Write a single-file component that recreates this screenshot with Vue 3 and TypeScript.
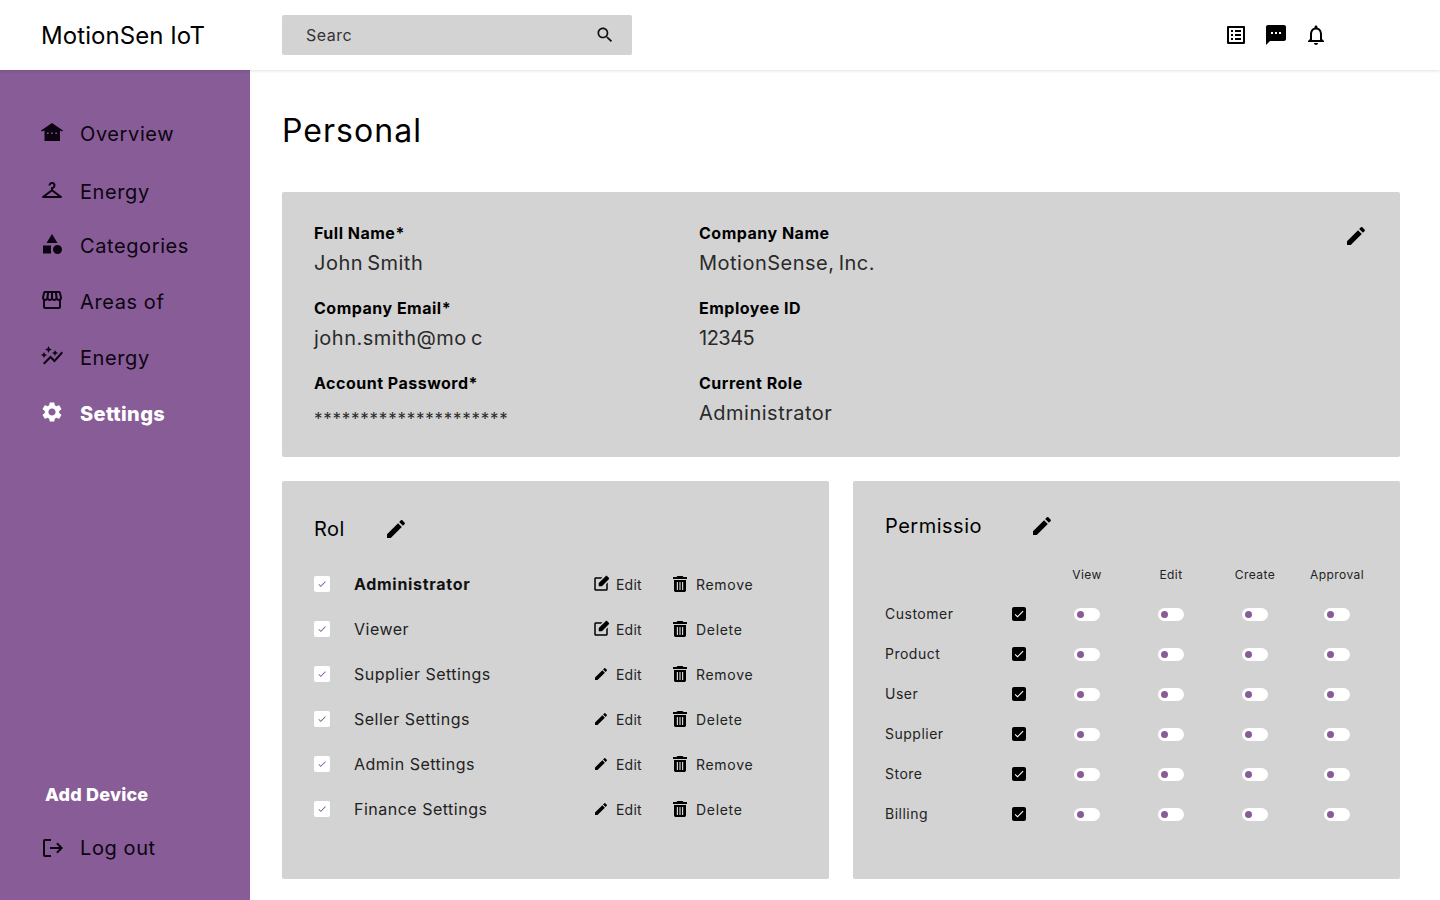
<script setup lang="ts">
const icons: Record<string, string> = {
  checkroom: 'M21.6 18.2 13 11.75v-.91c1.65-.49 2.8-2.17 2.43-4.05-.26-1.31-1.3-2.4-2.61-2.7C10.54 3.57 8.5 5.3 8.5 7.5h2c0-.83.67-1.5 1.5-1.5s1.5.67 1.5 1.5c0 .84-.69 1.52-1.53 1.5-.54-.01-.97.45-.97.99v1.76L2.4 18.2c-.77.58-.36 1.8.6 1.8h18c.96 0 1.37-1.22.6-1.8zM6 18l6-4.5 6 4.5H6z',
  category: 'M12 2l-5.5 9h11zM17.5 13a4.5 4.5 0 1 0 0 9 4.5 4.5 0 0 0 0-9zM3 13.5h8v8H3z',
  store: 'M21.9 8.89l-1.05-4.37c-.22-.9-1-1.52-1.91-1.52H5.05c-.9 0-1.69.63-1.9 1.52L2.1 8.89c-.24 1.02-.02 2.06.62 2.88.08.11.19.19.28.29V19c0 1.1.9 2 2 2h14c1.1 0 2-.9 2-2v-6.94c.09-.09.2-.18.28-.28.64-.82.87-1.87.62-2.89zm-2.99-3.9l1.05 4.37c.1.42.01.84-.25 1.17-.14.18-.44.47-.94.47-.61 0-1.14-.49-1.21-1.14L16.98 5l1.93-.01zM13 5h1.96l.54 4.52c.05.39-.07.78-.33 1.07-.22.26-.54.41-.95.41-.67 0-1.22-.59-1.22-1.31V5zM8.49 9.52L9.04 5H11v4.69c0 .72-.55 1.31-1.29 1.31-.34 0-.65-.15-.89-.41-.25-.29-.37-.68-.33-1.07zm-4.45-.16L5.05 5h1.97l-.58 4.86c-.08.65-.6 1.14-1.21 1.14-.49 0-.8-.29-.93-.47-.27-.32-.36-.75-.26-1.17zM5 19v-6.03c.08.01.15.03.23.03.87 0 1.66-.36 2.24-.95.6.6 1.4.95 2.31.95.87 0 1.65-.36 2.23-.93.59.57 1.39.93 2.29.93.84 0 1.64-.35 2.24-.95.58.59 1.37.95 2.24.95.08 0 .15-.02.23-.03V19H5z',
  graph: 'M14.06 9.94L12 9l2.06-.94L15 6l.94 2.06L18 9l-2.06.94L15 12l-.94-2.06zM4 14l.94-2.06L7 11l-2.06-.94L4 8l-.94 2.06L1 11l2.06.94L4 14zm4.5-5l1.09-2.41L12 5.5l-2.41-1.09L8.5 2 7.41 4.41 5 5.5l2.41 1.09L8.5 9zm-4 11.5l6-6.01 4 4L23 8.93l-1.41-1.41-7.09 7.97-4-4L3 19l1.5 1.5z',
  settings: 'M19.14 12.94c.04-.3.06-.61.06-.94 0-.32-.02-.64-.07-.94l2.03-1.58c.18-.14.23-.41.12-.61l-1.92-3.32c-.12-.22-.37-.29-.59-.22l-2.39.96c-.5-.38-1.03-.7-1.62-.94l-.36-2.54c-.04-.24-.24-.41-.48-.41h-3.84c-.24 0-.43.17-.47.41l-.36 2.54c-.59.24-1.13.57-1.62.94l-2.39-.96c-.22-.08-.47 0-.59.22L2.74 8.87c-.12.21-.08.47.12.61l2.03 1.58c-.05.3-.09.63-.09.94s.02.64.07.94l-2.03 1.58c-.18.14-.23.41-.12.61l1.92 3.32c.12.22.37.29.59.22l2.39-.96c.5.38 1.03.7 1.62.94l.36 2.54c.05.24.24.41.48.41h3.84c.24 0 .44-.17.47-.41l.36-2.54c.59-.24 1.13-.56 1.62-.94l2.39.96c.22.08.47 0 .59-.22l1.92-3.32c.12-.22.07-.47-.12-.61l-2.01-1.58zM12 15.6c-1.98 0-3.6-1.62-3.6-3.6s1.62-3.6 3.6-3.6 3.6 1.62 3.6 3.6-1.62 3.6-3.6 3.6z',
  house: 'M12 3 1 10.500 1.600 11.500 4.500 10.500V21h15.500V10.500l2.400 1 .6-1zM7 12.400h1.500v1.500H7zM11.200 12.400h1.500v1.500h-1.500zM15.400 12.400h1.500v1.500h-1.500z',
  logout: 'M5 5h6V3H5c-1.100 0-2 .9-2 2v14c0 1.100.9 2 2 2h6v-2H5zM10 11h9.200l-3-3 1.400-1.400L23 12l-5.400 5.400-1.400-1.400 3-3H10z',
  search: 'M15.5 14h-.79l-.28-.27C15.41 12.59 16 11.11 16 9.5 16 5.91 13.09 3 9.5 3S3 5.91 3 9.5 5.91 16 9.5 16c1.61 0 3.09-.59 4.23-1.57l.27.28v.79l5 4.99L20.49 19l-4.99-5zm-6 0C7.01 14 5 11.99 5 9.5S7.01 5 9.500 5 14 7.010 14 9.500 11.990 14 9.500 14z',
  list: 'M19 5v14H5V5h14m1.100-2H3.900c-.5 0-.9.4-.9.9v16.200c0 .4.4.9.9.9h16.200c.4 0 .9-.5.9-.9V3.900c0-.5-.5-.9-.9-.9zM11 7h6v2h-6V7zm0 4h6v2h-6v-2zm0 4h6v2h-6zM7 7h2v2H7zm0 4h2v2H7zm0 4h2v2H7z',
  sms: 'M20 2H4c-1.100 0-1.990.9-1.990 2L2 22l4-4h14c1.100 0 2-.9 2-2V4c0-1.100-.9-2-2-2zM9 11H7V9h2v2zm4 0h-2V9h2v2zm4 0h-2V9h2v2z',
  bell: 'M12 22c1.100 0 2-.9 2-2h-4c0 1.100.9 2 2 2zm6-6v-5c0-3.070-1.630-5.640-4.500-6.320V4c0-.83-.67-1.500-1.500-1.500s-1.500.67-1.500 1.500v.68C7.640 5.360 6 7.920 6 11v5l-2 2v1h16v-1l-2-2zm-2 1H8v-6c0-2.480 1.510-4.500 4-4.500s4 2.020 4 4.500v6z',
  edit: 'M3 17.250V21h3.750L17.810 9.940l-3.750-3.750L3 17.250zM20.710 7.040c.39-.39.39-1.020 0-1.410l-2.340-2.340c-.39-.39-1.020-.39-1.410 0l-1.830 1.830 3.750 3.750 1.830-1.830z',
  editBox: 'M5 21c-1.100 0-2-.9-2-2V5c0-1.100.9-2 2-2h8.900l-2 2H5v14h14v-6.900l2-2V19c0 1.100-.9 2-2 2zM9 15v-4.250l9.200-9.200c.6-.6 1.500-.6 2.100 0l2.100 2.100c.6.6.6 1.500 0 2.100L13.250 15z',
  trash: 'M4.500 0h5l1 1H14v2H0V1h3.500zM1 4h12v10.200c0 1-.8 1.800-1.800 1.800H2.800C1.800 16 1 15.200 1 14.200zM3.800 6v8h1.200V6zM6.400 6v8h1.200V6zM9 6v8h1.200V6z',
  check: 'M9 16.170 4.830 12l-1.420 1.410L9 19 21 7l-1.410-1.410z'
}

const navItems = [
  { label: 'Overview', icon: 'house', shift: '' },
  { label: 'Energy', icon: 'checkroom', shift: 'row-b' },
  { label: 'Categories', icon: 'category', shift: '' },
  { label: 'Areas of', icon: 'store', shift: '' },
  { label: 'Energy', icon: 'graph', shift: '' },
  { label: 'Settings', icon: 'settings', shift: 'active' }
]

const profile = [
  [
    { label: 'Full Name*', value: 'John Smith', kind: '' },
    { label: 'Company Email*', value: 'john.smith@mo c', kind: '' },
    { label: 'Account Password*', value: '*********************', kind: 'secret' }
  ],
  [
    { label: 'Company Name', value: 'MotionSense, Inc.', kind: '' },
    { label: 'Employee ID', value: '12345', kind: 'digits' },
    { label: 'Current Role', value: 'Administrator', kind: '' }
  ]
]

const roles = [
  { name: 'Administrator', icon: 'editBox', action: 'Remove', strong: true },
  { name: 'Viewer', icon: 'editBox', action: 'Delete', strong: false },
  { name: 'Supplier Settings', icon: 'edit', action: 'Remove', strong: false },
  { name: 'Seller Settings', icon: 'edit', action: 'Delete', strong: false },
  { name: 'Admin Settings', icon: 'edit', action: 'Remove', strong: false },
  { name: 'Finance Settings', icon: 'edit', action: 'Delete', strong: false }
]

const columns = ['View', 'Edit', 'Create', 'Approval']
const permissions = ['Customer', 'Product', 'User', 'Supplier', 'Store', 'Billing']
</script>

<template>
  <div class="app">
    <header class="topbar">
      <div class="logo">MotionSen IoT</div>
      <div class="search">
        <span>Searc</span>
        <svg class="search-icon" viewBox="0 0 24 24"><path :d="icons.search" /></svg>
      </div>
      <div class="top-icons">
        <svg viewBox="0 0 24 24"><path :d="icons.list" /></svg>
        <svg viewBox="0 0 24 24"><path :d="icons.sms" /></svg>
        <svg viewBox="0 0 24 24"><path :d="icons.bell" /></svg>
      </div>
    </header>

    <div class="body">
      <aside class="sidebar">
        <nav class="nav">
          <a v-for="(item, i) in navItems" :key="i" class="nav-item" :class="item.shift">
            <svg viewBox="0 0 24 24"><path :d="icons[item.icon]" /></svg>
            <span>{{ item.label }}</span>
          </a>
        </nav>
        <div class="add-device">Add Device</div>
        <a class="nav-item logout">
          <svg viewBox="0 0 24 24"><path :d="icons.logout" /></svg>
          <span>Log out</span>
        </a>
      </aside>

      <main class="main">
        <h1 class="title">Personal</h1>

        <section class="card profile">
          <div v-for="(col, c) in profile" :key="c" class="profile-col">
            <div v-for="field in col" :key="field.label" class="field">
              <div class="field-label">{{ field.label }}</div>
              <div class="field-value" :class="field.kind">{{ field.value }}</div>
            </div>
          </div>
          <svg class="profile-edit" viewBox="0 0 24 24"><path :d="icons.edit" /></svg>
        </section>

        <div class="lower">
          <section class="card roles">
            <div class="card-head">
              <h2>Rol</h2>
              <svg viewBox="0 0 24 24"><path :d="icons.edit" /></svg>
            </div>
            <div v-for="role in roles" :key="role.name" class="role-row">
              <span class="tick">
                <svg viewBox="0 0 24 24"><path :d="icons.check" /></svg>
              </span>
              <span class="role-name" :class="{ strong: role.strong }">{{ role.name }}</span>
              <span class="role-action edit-action">
                <svg :class="{ pencil: role.icon === 'edit' }" viewBox="0 0 24 24"><path :d="icons[role.icon]" /></svg>
                Edit
              </span>
              <span class="role-action trash-action">
                <svg viewBox="0 0 14 16"><path fill-rule="evenodd" :d="icons.trash" /></svg>
                {{ role.action }}
              </span>
            </div>
          </section>

          <section class="card perms">
            <div class="card-head perm-head">
              <h2>Permissio</h2>
              <svg viewBox="0 0 24 24"><path :d="icons.edit" /></svg>
            </div>
            <div class="perm-grid">
              <span></span>
              <span></span>
              <span v-for="col in columns" :key="col" class="perm-col">{{ col }}</span>
              <template v-for="perm in permissions" :key="perm">
                <span class="perm-name">{{ perm }}</span>
                <span class="perm-cell">
                  <span class="black-box">
                    <svg viewBox="0 0 24 24"><path :d="icons.check" /></svg>
                  </span>
                </span>
                <span v-for="col in columns" :key="col" class="perm-cell">
                  <span class="toggle"><i></i></span>
                </span>
              </template>
            </div>
          </section>
        </div>
      </main>
    </div>
  </div>
</template>

<style scoped>
.app {
  width: 1440px;
  height: 900px;
  overflow: hidden;
  display: flex;
  flex-direction: column;
  font-family: Inter, "Liberation Sans", sans-serif;
  color: #000;
  background: #fff;
}
svg {
  display: block;
  flex: none;
  fill: currentColor;
}
.topbar {
  position: relative;
  z-index: 1;
  flex: none;
  height: 70px;
  display: flex;
  align-items: center;
  box-shadow: 0 1px 3px rgba(0, 0, 0, 0.12);
  background: #fff;
}
.logo {
  width: 282px;
  padding-left: 41px;
  box-sizing: border-box;
  font-size: 24px;
  letter-spacing: 0.07px;
}
.search {
  width: 350px;
  height: 40px;
  box-sizing: border-box;
  padding: 0 17px 0 24px;
  display: flex;
  align-items: center;
  justify-content: space-between;
  background: #d3d3d3;
  border-radius: 2px;
  font-size: 16px;
  letter-spacing: 0.5px;
  color: #333;
}
.search-icon {
  width: 20px;
  height: 20px;
  color: #111;
}
.top-icons {
  margin-left: auto;
  margin-right: 112px;
  display: flex;
  gap: 16px;
}
.top-icons svg {
  width: 24px;
  height: 24px;
}
.body {
  flex: 1;
  display: flex;
  min-height: 0;
}
.sidebar {
  flex: none;
  width: 250px;
  box-sizing: border-box;
  padding: 36px 0 24px 40px;
  display: flex;
  flex-direction: column;
  background: #875c97;
}
.nav {
  flex: 1;
}
.nav-item {
  height: 56px;
  display: flex;
  align-items: center;
  gap: 16px;
  font-size: 20px;
  letter-spacing: 0.6px;
  color: #0c0410;
}
.nav-item svg {
  width: 24px;
  height: 24px;
  margin-top: -4px;
}
.row-b {
  position: relative;
  top: 2px;
}
.active {
  color: #fff;
  font-weight: 800;
  letter-spacing: 0.35px;
}
.logout svg {
  margin-top: 0;
}
.add-device {
  height: 58px;
  margin-bottom: -4px;
  padding-left: 5px;
  font-size: 18px;
  font-weight: 800;
  line-height: 58px;
  letter-spacing: 0.2px;
  color: #fff;
}
.main {
  flex: 1;
  min-width: 0;
  padding: 0 40px 0 32px;
}
.title {
  margin: 0;
  height: 122px;
  padding-top: 39px;
  box-sizing: border-box;
  font-size: 32px;
  font-weight: 400;
  line-height: 44px;
  letter-spacing: 1.05px;
}
.card {
  background: #d3d3d3;
  border-radius: 2px;
}
.profile {
  position: relative;
  height: 265px;
  box-sizing: border-box;
  padding: 29px 32px 0;
  display: flex;
}
.profile-col {
  width: 385px;
}
.field {
  height: 75px;
}
.field-label {
  height: 24px;
  font-size: 16px;
  line-height: 24px;
  font-weight: 700;
  letter-spacing: 0.5px;
}
.field-value {
  height: 30px;
  margin-top: 3px;
  font-size: 20px;
  line-height: 30px;
  letter-spacing: 0.5px;
  word-spacing: -2px;
  color: #2a2a2a;
}
.digits {
  letter-spacing: -0.5px;
}
.secret {
  padding-top: 6px;
  font-size: 17px;
  letter-spacing: 0.75px;
}
.profile-edit {
  position: absolute;
  top: 32px;
  right: 32px;
  width: 24px;
  height: 24px;
}
.lower {
  margin-top: 24px;
  display: flex;
  gap: 24px;
}
.lower .card {
  flex: 1;
  height: 398px;
  box-sizing: border-box;
}
.roles {
  padding: 32px 32px 0;
}
.card-head {
  display: flex;
  align-items: center;
  height: 32px;
  margin-bottom: 16px;
}
.card-head h2 {
  margin: 0;
  width: 70px;
  font-size: 20px;
  font-weight: 400;
  letter-spacing: 0.5px;
}
.card-head svg {
  width: 24px;
  height: 24px;
}
.role-row {
  height: 45px;
  display: flex;
  align-items: center;
  font-size: 14px;
  color: #222;
}
.tick {
  width: 16px;
  height: 16px;
  margin-right: 24px;
  display: flex;
  align-items: center;
  justify-content: center;
  background: #fff;
  border-radius: 2px;
  color: #875c97;
}
.tick svg {
  width: 10px;
  height: 10px;
}
.role-name {
  width: 238px;
  font-size: 16px;
  letter-spacing: 0.5px;
}
.role-name.strong {
  font-weight: 700;
  color: #111;
  letter-spacing: 0.7px;
}
.role-action {
  margin-top: 2px;
  display: flex;
  align-items: center;
  gap: 6px;
  letter-spacing: 0.2px;
}
.role-action svg {
  width: 18px;
  height: 18px;
  color: #000;
  margin-top: -1px;
}
.role-action svg.pencil {
  box-sizing: border-box;
  padding: 1px;
}
.edit-action {
  width: 79px;
}
.trash-action {
  gap: 9px;
  letter-spacing: 0.7px;
}
.role-action.trash-action svg {
  width: 14px;
  height: 16px;
  margin-left: 2px;
}
.perms {
  padding: 29px 23px 0 32px;
}
.perm-head {
  margin-bottom: 20px;
}
.perm-head h2 {
  width: 145px;
}
.perm-grid {
  display: grid;
  grid-template-columns: 108px 52px 84px 84px 84px 80px;
  grid-template-rows: 32px repeat(6, 40px);
  align-items: center;
  font-size: 14px;
  color: #222;
}
.perm-col {
  padding-bottom: 8px;
  text-align: center;
  font-size: 12px;
  letter-spacing: 0.45px;
}
.perm-name {
  padding-bottom: 2px;
  letter-spacing: 0.5px;
}
.perm-cell {
  display: flex;
  justify-content: center;
  align-items: center;
}
.black-box {
  width: 14px;
  height: 14px;
  display: flex;
  align-items: center;
  justify-content: center;
  background: #000;
  border-radius: 2px;
  color: #fff;
}
.black-box svg {
  width: 12px;
  height: 12px;
}
.toggle {
  width: 26px;
  height: 13px;
  display: flex;
  align-items: center;
  padding-left: 3px;
  box-sizing: border-box;
  background: #fff;
  border-radius: 7px;
}
.toggle i {
  width: 7px;
  height: 7px;
  border-radius: 50%;
  background: #875c97;
}
</style>
